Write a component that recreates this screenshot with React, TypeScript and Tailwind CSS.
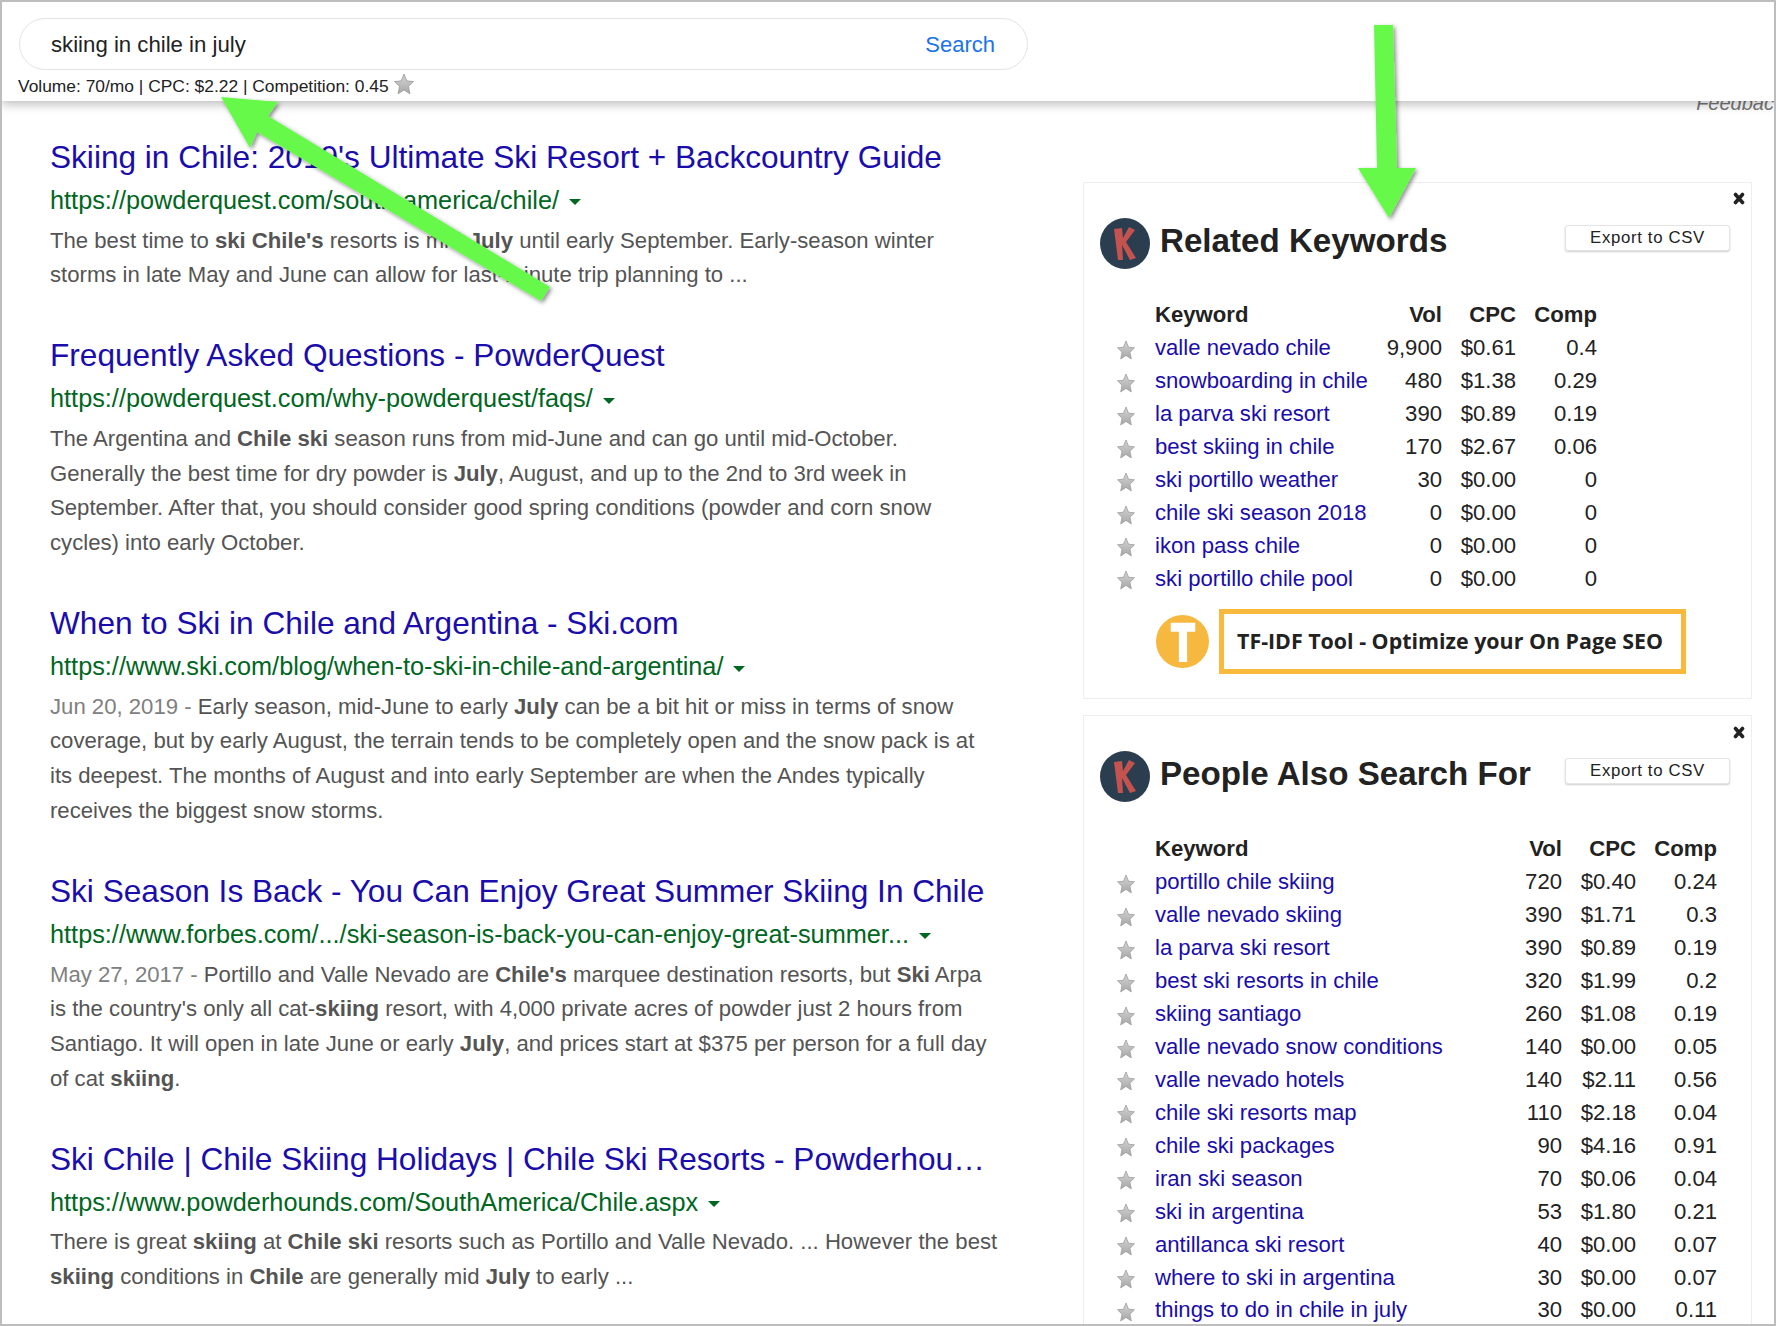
const TITLE = "text-[31.6px] leading-[46px] text-[#1a0dab] whitespace-nowrap overflow-hidden text-ellipsis";
const SNIP = "text-[22.15px] leading-[34.7px] text-[#545454] whitespace-nowrap";

function Caret() {
  return <span className="ml-[10px] inline-block align-middle w-0 h-0 border-x-[6px] border-x-transparent border-t-[6px] border-t-[#006621]" />;
}

function Result({ title, url, children }: { title: string; url: string; children: React.ReactNode }) {
  return (
    <div className="mb-[39.5px]">
      <div className={TITLE}>{title}</div>
      <div className="text-[25.3px] leading-[46.5px] text-[#006621] whitespace-nowrap -mt-[3px]">{url}<Caret /></div>
      <div className={SNIP}>{children}</div>
    </div>
  );
}

function Star({ className = "" }: { className?: string }) {
  return (
    <svg viewBox="0 0 20 20" preserveAspectRatio="none" className={className}>
      <defs>
        <linearGradient id="starfill" x1="0" y1="0" x2="0" y2="1">
          <stop offset="0" stopColor="#d4d4d4" />
          <stop offset="1" stopColor="#a8a8a8" />
        </linearGradient>
      </defs>
      <polygon points="10,1 12.8,7.2 19.4,7.8 14.4,12.2 15.9,18.9 10,15.4 4.1,18.9 5.6,12.2 0.6,7.8 7.2,7.2" fill="url(#starfill)" stroke="#999" strokeWidth="0.8" />
    </svg>
  );
}

function KLogo() {
  return (
    <svg viewBox="0 0 50 51" className="w-[50px] h-[51px] shrink-0">
      <ellipse cx="25" cy="25.5" rx="25" ry="25.5" fill="#2b3e50" />
      <path d="M14 11 L22 10 L23 20 L29 9 L35 12 L26 24 L36 40 L30 42 L22 27 L23 42 L18 42 Z" fill="#c4524f" />
    </svg>
  );
}

function TLogo() {
  return (
    <svg viewBox="0 0 54 54" className="w-[53px] h-[53px] shrink-0">
      <circle cx="27" cy="27" r="27" fill="#f7b83f" />
      <path d="M15 8 H40 V17 H31.7 V48 H23.3 V17 H15 Z" fill="#fff" />
    </svg>
  );
}

type Row = [string, string, string, string];

function KeywordTable({ rows, kw }: { rows: Row[]; kw: string }) {
  return (
    <table className="border-collapse">
      <thead>
        <tr className="h-[35px] text-[22.14px] leading-[30px] font-bold text-[#222]">
          <th className="w-[71px] p-0" />
          <th className={`${kw} p-0 text-left font-bold`}>Keyword</th>
          <th className="w-[62px] p-0 text-right font-bold">Vol</th>
          <th className="w-[74px] p-0 text-right font-bold">CPC</th>
          <th className="w-[81px] p-0 text-right font-bold">Comp</th>
        </tr>
      </thead>
      <tbody>
        {rows.map((r) => (
          <tr key={r[0]} className="h-[32.93px] text-[22.14px] leading-[30px] text-[#222]">
            <td className="p-0 pl-[33px]"><Star className="w-[18px] h-[20px] mt-[3px]" /></td>
            <td className="p-0 text-[#1a0dab] whitespace-nowrap">{r[0]}</td>
            <td className="p-0 text-right">{r[1]}</td>
            <td className="p-0 text-right">{r[2]}</td>
            <td className="p-0 text-right">{r[3]}</td>
          </tr>
        ))}
      </tbody>
    </table>
  );
}

function CardHead({ title }: { title: string }) {
  return (
    <div className="flex items-start pl-[16px] pr-[21px]">
      <KLogo />
      <div className="ml-[10px] text-[33.15px] leading-[46px] font-bold text-[#222] whitespace-nowrap">{title}</div>
      <button className="ml-auto mt-[7px] w-[165px] h-[26px] bg-white border border-[#e4e4e4] rounded-[3px] shadow-[0_1px_2px_rgba(0,0,0,0.2)] text-[16.8px] leading-[22px] tracking-[0.65px] text-[#222]">Export to CSV</button>
    </div>
  );
}

function Close() {
  return (
    <svg viewBox="0 0 12 12" className="w-[12px] h-[13px] ml-auto mr-[6px]">
      <path d="M2.5 2 L9.5 10 M9.5 2 L2.5 10" stroke="#222" strokeWidth="3.6" strokeLinecap="round" />
    </svg>
  );
}

const related: Row[] = [
  ["valle nevado chile", "9,900", "$0.61", "0.4"],
  ["snowboarding in chile", "480", "$1.38", "0.29"],
  ["la parva ski resort", "390", "$0.89", "0.19"],
  ["best skiing in chile", "170", "$2.67", "0.06"],
  ["ski portillo weather", "30", "$0.00", "0"],
  ["chile ski season 2018", "0", "$0.00", "0"],
  ["ikon pass chile", "0", "$0.00", "0"],
  ["ski portillo chile pool", "0", "$0.00", "0"],
];

const people: Row[] = [
  ["portillo chile skiing", "720", "$0.40", "0.24"],
  ["valle nevado skiing", "390", "$1.71", "0.3"],
  ["la parva ski resort", "390", "$0.89", "0.19"],
  ["best ski resorts in chile", "320", "$1.99", "0.2"],
  ["skiing santiago", "260", "$1.08", "0.19"],
  ["valle nevado snow conditions", "140", "$0.00", "0.05"],
  ["valle nevado hotels", "140", "$2.11", "0.56"],
  ["chile ski resorts map", "110", "$2.18", "0.04"],
  ["chile ski packages", "90", "$4.16", "0.91"],
  ["iran ski season", "70", "$0.06", "0.04"],
  ["ski in argentina", "53", "$1.80", "0.21"],
  ["antillanca ski resort", "40", "$0.00", "0.07"],
  ["where to ski in argentina", "30", "$0.00", "0.07"],
  ["things to do in chile in july", "30", "$0.00", "0.11"],
];

export default function App() {
  return (
    <div className="relative w-[1776px] h-[1326px] overflow-hidden bg-white border-2 border-[#bdbdbd] font-['Liberation_Sans',Arial,sans-serif]">
      <header className="relative z-10 h-[99px] bg-white shadow-[0_3px_10px_rgba(0,0,0,0.28)] pl-[17px] pt-[16px]">
        <div className="flex items-center w-[1009px] h-[52px] rounded-full border border-[#e3e3e3] pl-[31px] pr-[32px]">
          <span className="text-[22.2px] text-[#222] mt-[1px]">skiing in chile in july</span>
          <span className="ml-auto text-[22px] text-[#1a73e8]">Search</span>
        </div>
        <div className="flex items-center mt-[5px] -ml-[1px] text-[17.4px] leading-[22px] text-[#222] whitespace-nowrap">
          Volume: 70/mo | CPC: $2.22 | Competition: 0.45
          <Star className="w-[20px] h-[22px] ml-[5px] -mt-[4px]" />
        </div>
      </header>

      <div className="absolute top-[86px] right-[-10px] text-[20px] italic text-[#777]">Feedback</div>

      <div className="flex">
        <main className="w-[936px] ml-[48px] pt-[33px] shrink-0">
          <Result title="Skiing in Chile: 2019's Ultimate Ski Resort + Backcountry Guide" url="https://powderquest.com/south-america/chile/">
            The best time to <b>ski Chile's</b> resorts is mid-<b>July</b> until early September. Early-season winter<br />
            storms in late May and June can allow for last-minute trip planning to ...
          </Result>
          <Result title="Frequently Asked Questions - PowderQuest" url="https://powderquest.com/why-powderquest/faqs/">
            The Argentina and <b>Chile ski</b> season runs from mid-June and can go until mid-October.<br />
            Generally the best time for dry powder is <b>July</b>, August, and up to the 2nd to 3rd week in<br />
            September. After that, you should consider good spring conditions (powder and corn snow<br />
            cycles) into early October.
          </Result>
          <Result title="When to Ski in Chile and Argentina - Ski.com" url="https://www.ski.com/blog/when-to-ski-in-chile-and-argentina/">
            <span className="text-[#808080]">Jun 20, 2019 - </span>Early season, mid-June to early <b>July</b> can be a bit hit or miss in terms of snow<br />
            coverage, but by early August, the terrain tends to be completely open and the snow pack is at<br />
            its deepest. The months of August and into early September are when the Andes typically<br />
            receives the biggest snow storms.
          </Result>
          <Result title="Ski Season Is Back - You Can Enjoy Great Summer Skiing In Chile" url="https://www.forbes.com/.../ski-season-is-back-you-can-enjoy-great-summer...">
            <span className="text-[#808080]">May 27, 2017 - </span>Portillo and Valle Nevado are <b>Chile's</b> marquee destination resorts, but <b>Ski</b> Arpa<br />
            is the country's only all cat-<b>skiing</b> resort, with 4,000 private acres of powder just 2 hours from<br />
            Santiago. It will open in late June or early <b>July</b>, and prices start at $375 per person for a full day<br />
            of cat <b>skiing</b>.
          </Result>
          <Result title="Ski Chile | Chile Skiing Holidays | Chile Ski Resorts - Powderhounds" url="https://www.powderhounds.com/SouthAmerica/Chile.aspx">
            There is great <b>skiing</b> at <b>Chile ski</b> resorts such as Portillo and Valle Nevado. ... However the best<br />
            <b>skiing</b> conditions in <b>Chile</b> are generally mid <b>July</b> to early ...
          </Result>
        </main>

        <aside className="ml-[97px] w-[669px] shrink-0 pt-[81px] flex flex-col gap-[16px]">
          <section className="h-[517px] border border-[#eeeeee] pt-[9px]">
            <div className="flex"><Close /></div>
            <div className="mt-[13px]"><CardHead title="Related Keywords" /></div>
            <div className="mt-[28px]"><KeywordTable rows={related} kw="w-[225px]" /></div>
            <div className="flex items-center gap-[10px] ml-[72px] mt-[13.5px]">
              <TLogo />
              <div className="flex items-center w-[467px] h-[65px] border-[5px] border-[#f9b93c] pl-[13px] font-['Open_Sans',sans-serif] text-[21.4px] font-bold text-[#222] whitespace-nowrap">TF-IDF Tool - Optimize your On Page SEO</div>
            </div>
          </section>
          <section className="h-[700px] border border-[#eeeeee] pt-[10px]">
            <div className="flex"><Close /></div>
            <div className="mt-[12px]"><CardHead title="People Also Search For" /></div>
            <div className="mt-[29px]"><KeywordTable rows={people} kw="w-[345px]" /></div>
          </section>
        </aside>
      </div>

      <svg className="absolute left-0 top-0 z-20 w-[1776px] h-[1326px] pointer-events-none" viewBox="0 0 1776 1326">
        <defs>
          <filter id="arrowshadow" x="-20%" y="-20%" width="140%" height="140%">
            <feDropShadow dx="2" dy="2" stdDeviation="2" floodColor="#000" floodOpacity="0.45" />
          </filter>
        </defs>
        <polygon filter="url(#arrowshadow)" fill="#66f94a" points="219,95 276,100 266,114 548,285 539,299 255,130 248,146" />
        <polygon filter="url(#arrowshadow)" fill="#66f94a" points="1372,23 1391,23 1395,166 1414,166 1387,216 1356,166 1375,166" />
      </svg>
    </div>
  );
}
